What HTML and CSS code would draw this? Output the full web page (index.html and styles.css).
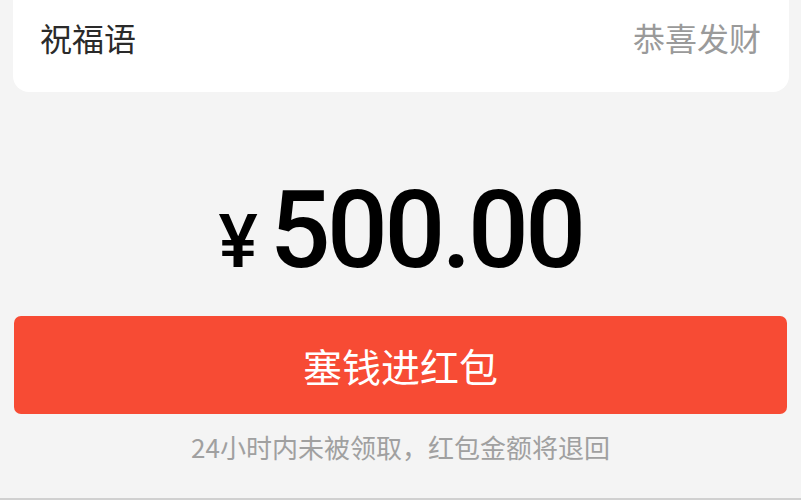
FILE: index.html
```html
<!DOCTYPE html>
<html lang="zh-CN">
<head>
<meta charset="utf-8">
<link rel="stylesheet" href="styles.css">
</head>
<body>
<div class="page">
  <div class="card">
    <span class="label">祝福语</span>
    <span class="value">恭喜发财</span>
  </div>
  <div class="amount">
    <span class="yen">¥</span><span class="num">500.00</span>
  </div>
  <button class="btn">塞钱进红包</button>
  <p class="note">24小时内未被领取，红包金额将退回</p>
</div>
</body>
</html>
```
FILE: styles.css
```css
html, body {
  margin: 0;
  padding: 0;
  background: #f4f4f4;
}
.page {
  width: 801px;
  height: 498px;
  border-bottom: 2px solid #d0d0d0;
  box-sizing: content-box;
  display: flex;
  flex-direction: column;
  font-family: "Noto Sans CJK SC", "Noto Sans", sans-serif;
  overflow: hidden;
}
.card {
  margin: 0 12px 0 13px;
  height: 92px;
  background: #fff;
  border-radius: 0 0 16px 16px;
  display: flex;
  justify-content: space-between;
  align-items: flex-start;
  padding: 14px 28px 0 27px;
  box-sizing: border-box;
  font-size: 32px;
  line-height: 46px;
}
.label { color: #2a2a2a; }
.value { color: #9a9a9a; }
.amount {
  margin-top: 89px;
  display: flex;
  justify-content: center;
  align-items: baseline;
  color: #000;
  font-family: Roboto, "Liberation Sans", sans-serif;
}
.yen {
  font-size: 74px;
  line-height: 74px;
  font-weight: 500;
  margin-right: 12px;
}
.num {
  font-size: 107px;
  line-height: 100px;
  font-weight: 500;
  letter-spacing: -3.5px;
}
.btn {
  margin: 35px 14px 0 14px;
  height: 98px;
  border: none;
  border-radius: 7px;
  background: #f74b34;
  color: #fff;
  font-family: "Noto Sans CJK SC", sans-serif;
  font-size: 39px;
  line-height: 98px;
  padding: 0;
}
.note {
  margin: 15px 0 0 0;
  text-align: center;
  color: #a0a0a0;
  font-size: 26px;
  line-height: 36px;
}
```
